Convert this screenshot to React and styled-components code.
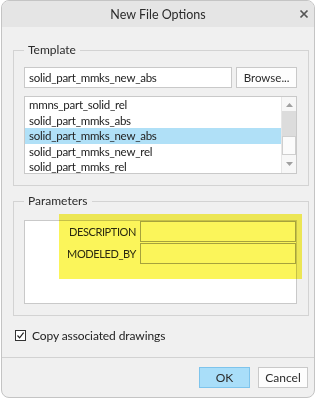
import React from 'react';
import styled, { createGlobalStyle } from 'styled-components';

const Global = createGlobalStyle`
  html, body { margin: 0; padding: 0; background: #ffffff; }
  body { font-family: Lato, "Noto Sans", sans-serif; font-size: 11.5px; color: #222; }
`;

const Page = styled.div`
  width: 320px;
  height: 400px;
  padding-left: 1px;
  box-sizing: border-box;
`;

const Dialog = styled.div`
  width: 314px;
  height: 398px;
  box-sizing: border-box;
  border: 1px solid #c4c4c4;
  border-radius: 8px;
  background: #f0f0f0;
  display: flex;
  flex-direction: column;
  overflow: hidden;
`;

const TitleBar = styled.div`
  height: 26px;
  flex: none;
  background: #e5e5e5;
  display: grid;
  grid-template-columns: 1fr auto 1fr;
  align-items: center;
`;

const Title = styled.div`
  grid-column: 2;
  font-size: 12.5px;
  color: #2b2b2b;
`;

const Close = styled.div`
  grid-column: 3;
  justify-self: end;
  margin-right: 5px;
  display: flex;
`;

const Body = styled.div`
  flex: 1;
  padding: 15px 5px 0 11px;
`;

const Group = styled.fieldset`
  margin: ${p => p.$top || 0}px 0 0 0;
  border: 1px solid #d3d3d3;
  padding: ${p => p.$pt}px 11px ${p => p.$pb}px 10px;
  min-width: 0;
`;

const Legend = styled.legend`
  padding: 0 4px;
  line-height: 16px;
  font-size: 12px;
  color: #2b2b2b;
`;

const Row = styled.div`
  display: flex;
  gap: 4px;
`;

const TextBox = styled.div`
  width: 209px;
  height: 21px;
  box-sizing: border-box;
  border: 1px solid #c9c9c9;
  background: #fff;
  padding: 0 4px;
  line-height: 19px;
  letter-spacing: -0.25px;
`;

const Button = styled.div`
  width: ${p => p.$w}px;
  height: 21px;
  box-sizing: border-box;
  border: 1px solid ${p => (p.$primary ? '#7ec4ec' : '#c9c9c9')};
  background: ${p => (p.$primary ? '#a9def9' : '#fdfdfd')};
  text-align: center;
  line-height: 19px;
  color: #2b2b2b;
`;

const List = styled.div`
  margin-top: 8px;
  height: 78px;
  box-sizing: border-box;
  border: 1px solid #c9c9c9;
  background: #fff;
  display: flex;
  overflow: hidden;
`;

const Items = styled.div`
  flex: 1;
`;

const Item = styled.div`
  height: 15.5px;
  line-height: 15.5px;
  padding-left: 4px;
  letter-spacing: -0.25px;
  background: ${p => (p.$selected ? '#b0e0f7' : 'transparent')};
`;

const Scrollbar = styled.div`
  width: 14px;
  flex: none;
  display: flex;
  flex-direction: column;
  align-items: stretch;
  background: #f7f7f7;
  border-left: 1px solid #e6e6e6;
`;

const Arrow = styled.div`
  height: 12px;
  display: flex;
  align-items: center;
  justify-content: center;
  margin: ${p => p.$m};
`;

const Track = styled.div`
  height: ${p => p.$h}px;
  background: ${p => p.$bg};
  border: ${p => (p.$border ? '1px solid #cfcfcf' : 'none')};
  box-sizing: border-box;
`;

const ParamBox = styled.div`
  position: relative;
  height: 84px;
  box-sizing: border-box;
  border: 1px solid #c9c9c9;
  background: #fff;
  display: grid;
  grid-template-columns: 1fr 156px;
  grid-auto-rows: 21px;
  row-gap: 1px;
  align-content: start;
`;

const ParamLabel = styled.div`
  text-align: right;
  padding-right: 4px;
  line-height: 21px;
  font-size: 11px;
  letter-spacing: -0.4px;
  color: #2b2b2b;
`;

const ParamField = styled.div`
  border: 1px solid #a9a9a9;
  background: #fff;
`;

const Highlight = styled.div`
  position: absolute;
  left: 34px;
  top: -7px;
  width: 243px;
  height: 65px;
  background: #fbf55a;
  mix-blend-mode: multiply;
  pointer-events: none;
`;

const CheckRow = styled.div`
  margin-top: 12px;
  display: flex;
  align-items: center;
  gap: 6px;
  padding-left: 2px;
  font-size: 12px;
  letter-spacing: -0.1px;
`;

const Box = styled.div`
  width: 11px;
  height: 11px;
  box-sizing: border-box;
  border: 1px solid #333;
  background: #fff;
  display: flex;
  align-items: center;
  justify-content: center;
`;

const Separator = styled.div`
  height: 1px;
  background: #d2d2d2;
  flex: none;
`;

const Footer = styled.div`
  height: 39px;
  flex: none;
  display: flex;
  justify-content: flex-end;
  align-items: flex-start;
  gap: 8px;
  padding: 9px 6px 0 0;
  box-sizing: border-box;
  font-size: 12px;
`;

const items = [
  'mmns_part_solid_rel',
  'solid_part_mmks_abs',
  'solid_part_mmks_new_abs',
  'solid_part_mmks_new_rel',
  'solid_part_mmks_rel',
];

export default function App() {
  return (
    <Page>
      <Global />
      <Dialog>
        <TitleBar>
          <Title>New File Options</Title>
          <Close>
            <svg width="10" height="10" viewBox="0 0 10 10">
              <path d="M1.5 1.5 L8.5 8.5 M8.5 1.5 L1.5 8.5" stroke="#555" strokeWidth="1.7" />
            </svg>
          </Close>
        </TitleBar>
        <Body>
          <Group $pt={9} $pb={11}>
            <Legend>Template</Legend>
            <Row>
              <TextBox>solid_part_mmks_new_abs</TextBox>
              <Button $w={61}>Browse...</Button>
            </Row>
            <List>
              <Items>
                {items.map((it, i) => (
                  <Item key={it} $selected={i === 2}>{it}</Item>
                ))}
              </Items>
              <Scrollbar>
                <Arrow $m="2px 0 0">
                  <svg width="7" height="4" viewBox="0 0 7 4"><path d="M0 4 L3.5 0 L7 4 Z" fill="#a0a0a0" /></svg>
                </Arrow>
                <Track $h={25} $bg="#dcdcdc" />
                <Track $h={19} $bg="#fbfbfb" $border />
                <Arrow $m="3px 0 0">
                  <svg width="7" height="4" viewBox="0 0 7 4"><path d="M0 0 L3.5 4 L7 0 Z" fill="#a0a0a0" /></svg>
                </Arrow>
              </Scrollbar>
            </List>
          </Group>
          <Group $top={7} $pt={11} $pb={11}>
            <Legend>Parameters</Legend>
            <ParamBox>
              <ParamLabel>DESCRIPTION</ParamLabel>
              <ParamField />
              <ParamLabel>MODELED_BY</ParamLabel>
              <ParamField />
              <Highlight />
            </ParamBox>
          </Group>
          <CheckRow>
            <Box>
              <svg width="9" height="9" viewBox="0 0 9 9">
                <path d="M1.5 4.5 L3.6 6.8 L7.6 1.6" stroke="#222" strokeWidth="1.2" fill="none" />
              </svg>
            </Box>
            <span>Copy associated drawings</span>
          </CheckRow>
        </Body>
        <Separator />
        <Footer>
          <Button $w={51} $primary>OK</Button>
          <Button $w={50}>Cancel</Button>
        </Footer>
      </Dialog>
    </Page>
  );
}
